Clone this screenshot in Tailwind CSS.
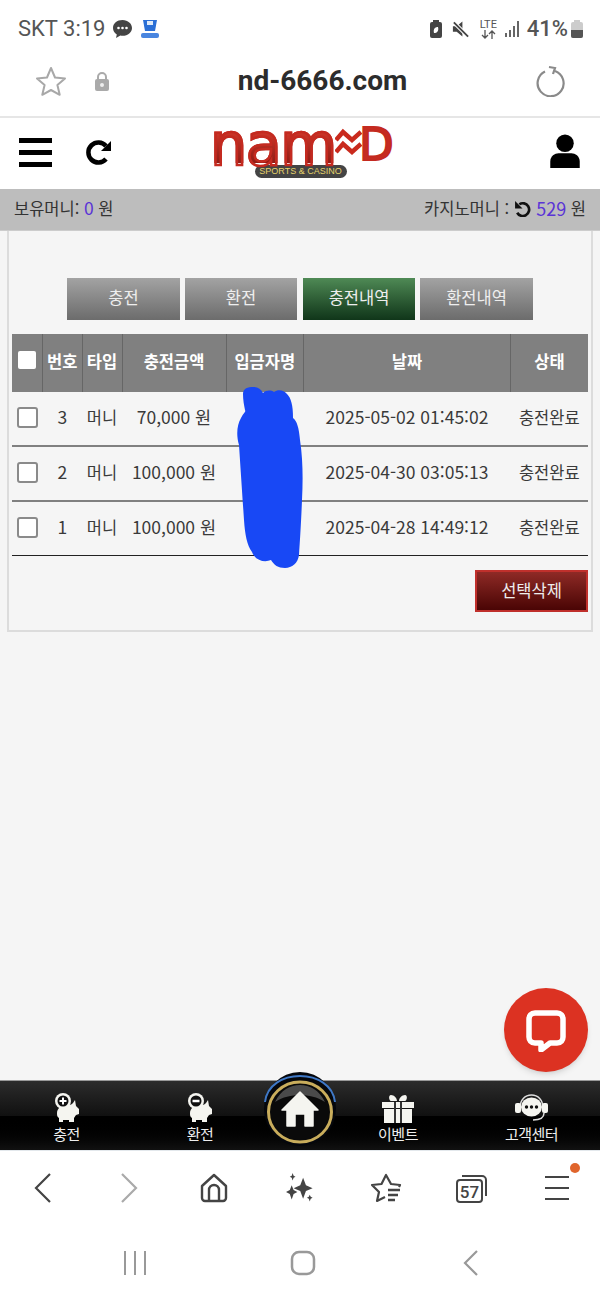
<!DOCTYPE html>
<html lang="ko">
<head>
  <meta charset="UTF-8" />
  <title>충전내역</title>
  <script src="https://cdn.jsdelivr.net/npm/@tailwindcss/browser@4"></script>
</head>
<body class="bg-white font-['Noto_Sans_CJK_KR','Noto_Sans',sans-serif]">
  <div class="relative w-[600px] h-[1300px] overflow-hidden flex flex-col">

    <!-- Status bar -->
    <div class="h-[56px] shrink-0 flex items-center justify-between pl-[18px] pr-[17px] pt-[1px] font-['Roboto',sans-serif] text-[#555]">
      <div class="flex items-center">
        <span class="text-[22px] leading-none">SKT 3:19</span>
        <svg class="ml-[7px]" width="21" height="20" viewBox="0 0 21 20"><path d="M10.5 1C5 1 1 4.5 1 9c0 2.700 1.500 5 3.800 6.400L4 19l4.400-2.400c.7.100 1.400.2 2.100.2 5.500 0 9.500-3.500 9.500-7.800S16 1 10.500 1z" fill="#444"/><circle cx="6.500" cy="9" r="1.300" fill="#fff"/><circle cx="10.500" cy="9" r="1.300" fill="#fff"/><circle cx="14.500" cy="9" r="1.300" fill="#fff"/></svg>
        <svg class="ml-[7px]" width="20" height="20" viewBox="0 0 20 20"><path d="M3 1h14l-2 11H5z" fill="#2b6fd6"/><path d="M7 2h6v4H7z" fill="#dfeaf8"/><rect x="1" y="14" width="18" height="5" rx="2" fill="#4a86e0"/></svg>
      </div>
      <div class="flex items-center">
        <svg width="12" height="20" viewBox="0 0 12 20"><rect x="0" y="3" width="12" height="16" rx="2" fill="#444"/><rect x="3" y="1" width="6" height="3" fill="#444"/><path d="M8 8c-3 0-5 2-4 6 3 0 5-2 4-6z" fill="#fff"/></svg>
        <svg class="ml-[9px]" width="19" height="20" viewBox="0 0 20 20"><path d="M2 7h4l6-5v16l-6-5H2z" fill="#444"/><path d="M3 3l15 15" stroke="#fff" stroke-width="4"/><path d="M3 3l15 15" stroke="#444" stroke-width="2"/></svg>
        <div class="ml-[9px] w-[19px] flex flex-col items-center text-[#555]">
          <span class="text-[11px] leading-[11px]">LTE</span>
          <svg width="15" height="9" viewBox="0 0 15 9" fill="none" stroke="#555" stroke-width="1.300"><path d="M4 0v8M1 5l3 3 3-3M11 9V1M8 4l3-3 3 3"/></svg>
        </div>
        <svg class="ml-[6px]" width="16" height="18" viewBox="0 0 16 18"><rect x="1" y="13" width="2" height="4" fill="#666"/><rect x="5" y="10" width="2" height="7" fill="#666"/><rect x="9" y="6" width="2" height="11" fill="#666"/><rect x="13" y="1" width="2" height="16" fill="#666"/></svg>
        <span class="ml-[7px] text-[22px] leading-none font-medium">41%</span>
        <svg class="ml-[3px]" width="12" height="20" viewBox="0 0 12 20"><rect x="0" y="3" width="12" height="16" rx="2" fill="#ccc"/><rect x="3" y="1" width="6" height="3" fill="#ccc"/><path d="M0 11h12v6a2 2 0 0 1-2 2H2a2 2 0 0 1-2-2z" fill="#555"/></svg>
      </div>
    </div>

    <!-- URL bar -->
    <div class="h-[62px] shrink-0 flex items-center border-b-2 border-[#e6e6e6] pl-[35px] pr-[35px] pb-[10px]">
      <svg width="32" height="32" viewBox="0 0 32 32" fill="none" stroke="#a8a8a8" stroke-width="2" stroke-linejoin="round"><path d="M16 3l4 9.500 10 .9-7.600 6.600 2.300 9.800L16 25l-8.700 4.800 2.300-9.800L2 13.400l10-.9z"/></svg>
      <svg class="ml-[27px]" width="16" height="22" viewBox="0 0 16 22"><path d="M4 10V7a4 4 0 0 1 8 0v3" fill="none" stroke="#aaa" stroke-width="2"/><rect x="1" y="9" width="14" height="12" rx="2" fill="#aaa"/><circle cx="8" cy="15" r="2" fill="#eee"/></svg>
      <span class="flex-1 text-center font-['Roboto',sans-serif] font-bold text-[28px] leading-none text-[#2c2c2c]">nd-6666.com</span>
      <svg width="30" height="32" viewBox="0 0 30 32" fill="none" stroke="#8a8a8a" stroke-width="2.200"><path d="M10 6.500A13 13 0 1 0 20 6"/><path d="M15 3l6 1-2 6" transform="translate(-1 -1)"/></svg>
    </div>

    <!-- Site header -->
    <div class="h-[71px] shrink-0 flex items-center pl-[19px] pr-[19px]">
      <div class="w-[33px] flex flex-col gap-[7px] mt-[-2px]">
        <div class="h-[5px] bg-black"></div>
        <div class="h-[5px] bg-black"></div>
        <div class="h-[5px] bg-black"></div>
      </div>
      <svg class="ml-[32px] mt-[-2px]" width="30" height="30" viewBox="0 0 30 30" fill="none"><path d="M22 21a10 10 0 1 1 0-13" stroke="#000" stroke-width="4.500"/><path d="M27 3v10H17z" fill="#000"/></svg>
      <div class="flex-1 flex flex-col items-center mt-[-2px] mr-[62px]">
        <div class="relative top-[-1px] flex items-center h-[36px] font-['DejaVu_Sans',sans-serif]">
          <span class="text-[58px] leading-[36px] tracking-[-1px] bg-gradient-to-b from-[#d83a2c] to-[#8f1d16] bg-clip-text text-transparent [-webkit-text-stroke:2.500px_#c42a20]">nam</span>
          <svg class="ml-[-1px]" width="27" height="34" viewBox="0 0 27 34" fill="none" stroke="#c92a1d" stroke-width="4.500"><path d="M1 12l7-8 9 8 9-8"/><path d="M1 24l7-8 9 8 9-8"/></svg>
          <span class="ml-[-3px] mr-[-3px] text-[45px] leading-[36px] text-[#c62c20] [-webkit-text-stroke:2px_#c42a20]">D</span>
        </div>
        <div class="mt-[1px] w-[92px] h-[13px] rounded-full bg-[#444] text-center font-['Liberation_Sans',sans-serif] text-[9px] leading-[13px] text-[#e6d36a]">SPORTS &amp; CASINO</div>
      </div>
      <svg width="32" height="35" viewBox="0 0 34 38" class="mt-[-5px]"><circle cx="17" cy="10" r="9.500" fill="#000"/><path d="M1 37v-7c0-6 5-9 9-9h14c4 0 9 3 9 9v7z" fill="#000"/></svg>
    </div>

    <!-- Money bar -->
    <div class="h-[42px] shrink-0 bg-[#bdbdbd] border-b border-[#ccc] flex items-center justify-between px-[14px] pb-[2px] text-[16.500px] text-[#333]">
      <div>보유머니: <span class="text-[17.500px] text-[#5a34d6]">0</span> 원</div>
      <div class="flex items-center">카지노머니 :
        <svg class="mx-[5px]" width="17" height="17" viewBox="0 0 16 16" fill="none"><path d="M5 4a6 6 0 1 1-2 8" stroke="#111" stroke-width="2.500"/><path d="M1 1v7h7z" fill="#111"/></svg>
        <span class="text-[18px] text-[#5a34d6]">529</span>&nbsp;원
      </div>
    </div>

    <!-- Page body -->
    <div class="flex-1 bg-[#f5f5f5] px-[7px]">
      <div class="h-[401px] border-2 border-t-0 border-[#dcdcdc] px-[3px] pt-[47px]">
        <div class="flex justify-center gap-[5px] text-[16.500px] leading-[39px] text-center text-[#eee]">
          <div class="w-[113px] h-[42px] bg-gradient-to-b from-[#a3a3a3] to-[#6c6c6c]">충전</div>
          <div class="w-[112px] h-[42px] bg-gradient-to-b from-[#a3a3a3] to-[#6c6c6c]">환전</div>
          <div class="w-[112px] h-[42px] bg-gradient-to-b from-[#4f8a55] to-[#10361a] ml-[1px]">충전내역</div>
          <div class="w-[113px] h-[42px] bg-gradient-to-b from-[#a3a3a3] to-[#6c6c6c]">환전내역</div>
        </div>

        <table class="mt-[14px] w-[576px] table-fixed border-collapse text-center text-[16.500px] text-[#3a3a3a]">
          <thead>
            <tr class="h-[58px] bg-[#808080] text-white font-bold">
              <th class="w-[30.500px] border-r border-[#666]"><div class="w-[18px] h-[18px] mx-auto rounded-[2px] bg-white mt-[-6px]"></div></th>
              <th class="w-[39.500px] border-r border-[#666] pb-[3px]">번호</th>
              <th class="w-[40px] border-r border-[#666] pb-[3px]">타입</th>
              <th class="w-[104px] border-r border-[#666] pb-[3px]">충전금액</th>
              <th class="w-[77.500px] border-r border-[#666] pb-[3px]">입금자명</th>
              <th class="w-[207px] border-r border-[#666] pb-[3px]">날짜</th>
              <th class="pb-[3px]">상태</th>
            </tr>
          </thead>
          <tbody class="[&_td]:pb-[2px]">
            <tr class="h-[54px] border-b-2 border-[#808080]">
              <td><div class="w-[21px] h-[21px] mx-auto rounded-[3px] border-2 border-[#8a8a8a] bg-white"></div></td>
              <td class="text-[17.500px]">3</td><td>머니</td><td class="text-[17.500px] whitespace-nowrap">70,000 원</td><td></td><td class="text-[17.500px] whitespace-nowrap">2025-05-02 01:45:02</td><td>충전완료</td>
            </tr>
            <tr class="h-[55px] border-b-2 border-[#808080]">
              <td><div class="w-[21px] h-[21px] mx-auto rounded-[3px] border-2 border-[#8a8a8a] bg-white"></div></td>
              <td class="text-[17.500px]">2</td><td>머니</td><td class="text-[17.500px] whitespace-nowrap">100,000 원</td><td></td><td class="text-[17.500px] whitespace-nowrap">2025-04-30 03:05:13</td><td>충전완료</td>
            </tr>
            <tr class="h-[54px] border-b border-[#222]">
              <td><div class="w-[21px] h-[21px] mx-auto rounded-[3px] border-2 border-[#8a8a8a] bg-white"></div></td>
              <td class="text-[17.500px]">1</td><td>머니</td><td class="text-[17.500px] whitespace-nowrap">100,000 원</td><td></td><td class="text-[17.500px] whitespace-nowrap">2025-04-28 14:49:12</td><td>충전완료</td>
            </tr>
          </tbody>
        </table>

        <div class="flex justify-end mt-[14px]">
          <div class="w-[113px] h-[42px] border-2 border-[#c0302c] bg-gradient-to-b from-[#8f2a26] to-[#4a0505] text-center text-[16.500px] leading-[36px] text-[#eee]">선택삭제</div>
        </div>
      </div>
    </div>

    <!-- Bottom site nav -->
    <div class="relative h-[70px] shrink-0 border-t border-[#999] bg-gradient-to-b from-[#2c2c2c] via-[#111] to-[#000] grid grid-cols-[133px_134px_66px_130px_137px] text-[15px] tracking-[-.5px] text-[#eee] text-center">
      <div class="absolute inset-x-0 top-[35px] bottom-0 bg-gradient-to-b from-black to-[#111]"></div>
      <div class="relative flex flex-col items-center pt-[12px]">
        <svg width="26" height="30" viewBox="0 0 26 30"><path d="M3 20c0-5 5-8 10-8 3 0 4 0 6-2l2-3 1 6 3 3v5l-3 1-2 3v4h-5v-2H9v2H5v-4c-2-1-2-3-2-5z" fill="#f5f5f0"/><circle cx="9" cy="8" r="8" fill="#f5f5f0"/><circle cx="9" cy="8" r="5.500" fill="#111"/><path d="M5.500 8h7M9 4.500v7" stroke="#fff" stroke-width="2"/></svg>
        <span class="leading-[18px] mt-[2px]">충전</span>
      </div>
      <div class="relative flex flex-col items-center pt-[12px]">
        <svg width="26" height="30" viewBox="0 0 26 30"><path d="M3 20c0-5 5-8 10-8 3 0 4 0 6-2l2-3 1 6 3 3v5l-3 1-2 3v4h-5v-2H9v2H5v-4c-2-1-2-3-2-5z" fill="#f5f5f0"/><circle cx="9" cy="8" r="8" fill="#f5f5f0"/><circle cx="9" cy="8" r="5.500" fill="#111"/><path d="M5.500 8h7" stroke="#fff" stroke-width="2.500"/></svg>
        <span class="leading-[18px] mt-[2px]">환전</span>
      </div>
      <div class="relative">
        <svg class="absolute left-[-4px] top-[-9px] overflow-visible" width="74" height="76" viewBox="0 0 74 76">
          <ellipse cx="37" cy="37" rx="36" ry="37" fill="#05070c"/>
          <path d="M2 30C4 13 20 4 37 4s33 9 35 26" fill="none" stroke="#3f78c6" stroke-width="2"/>
          <ellipse cx="37" cy="40" rx="31.500" ry="30" fill="#0a0a0a" stroke="#c9ad5c" stroke-width="3"/>
          <path d="M12 30c6-12 15-17 25-17s19 5 25 17c-8-5-16-7-25-7s-17 2-25 7z" fill="#4a4a4a"/>
          <path d="M37 20L19 38h5v16h8V42h10v12h8V38h5z" fill="#f5f5f0" stroke="#f5f5f0" stroke-width="1.500" stroke-linejoin="round"/>
        </svg>
      </div>
      <div class="relative flex flex-col items-center pt-[12px]">
        <svg width="32" height="30" viewBox="0 0 32 30"><path d="M9 2c3 0 6 3 6 6H9c-2 0-3-6 0-6zM23 2c-3 0-6 3-6 6h6c2 0 3-6 0-6z" fill="#f5f5f0"/><rect x="0" y="9" width="32" height="6" fill="#f5f5f0"/><rect x="2" y="16" width="28" height="14" fill="#f5f5f0"/><rect x="12" y="9" width="2" height="21" fill="#333"/><rect x="18" y="9" width="2" height="21" fill="#333"/></svg>
        <span class="leading-[18px] mt-[2px]">이벤트</span>
      </div>
      <div class="relative flex flex-col items-center pt-[12px]">
        <svg width="35" height="30" viewBox="0 0 35 30" fill="none"><path d="M6 15C6 7 11 2 17.500 2S29 7 29 15" stroke="#ddd" stroke-width="1.500"/><ellipse cx="17.500" cy="14" rx="10.500" ry="9.500" fill="#f5f5f0"/><rect x="1" y="10" width="6" height="10" rx="2" fill="#f5f5f0"/><rect x="28" y="10" width="6" height="10" rx="2" fill="#f5f5f0"/><circle cx="12.500" cy="14" r="1.700" fill="#111"/><circle cx="17.500" cy="14" r="1.700" fill="#111"/><circle cx="22.500" cy="14" r="1.700" fill="#111"/><path d="M30 20c0 5-4 7-11 7" stroke="#ddd" stroke-width="1.500"/></svg>
        <span class="leading-[18px] mt-[2px]">고객센터</span>
      </div>
    </div>

    <!-- Browser toolbar -->
    <div class="h-[75px] shrink-0 border-t border-[#e3e8ec] grid grid-cols-7 place-items-center">
      <svg width="20" height="32" viewBox="0 0 20 32" fill="none" stroke="#444" stroke-width="2.200"><path d="M17 2L3 16l14 14"/></svg>
      <svg width="20" height="32" viewBox="0 0 20 32" fill="none" stroke="#aaa" stroke-width="2.200"><path d="M3 2l14 14L3 30"/></svg>
      <svg width="30" height="30" viewBox="0 0 30 30" fill="none" stroke="#444" stroke-width="2.400" stroke-linejoin="round"><path d="M3 13L15 2l12 11v12a3 3 0 0 1-3 3H6a3 3 0 0 1-3-3z"/><path d="M10 28V17a5 5 0 0 1 10 0v11"/></svg>
      <svg width="30" height="30" viewBox="0 0 30 30" fill="#444"><path d="M18 5l3 8 7 3-7 3-3 8-3-8-7-3 7-3zM7 0l1 3 2 1-2 1-1 3-1-3-2-1 2-1zM6 13l2 5 4 2-4 2-2 6-2-6-4-2 4-2zM25 23l1 2 2 1-2 1-1 3-1-3-2-1 2-1z" transform="translate(1 0) scale(.95)"/></svg>
      <svg width="32" height="30" viewBox="0 0 32 30" fill="none" stroke="#444" stroke-width="2.200" stroke-linejoin="round"><path d="M29 14l1-2-9-1-5-9-4.500 9L2 12l7 7-2 9 8-4"/><path d="M18 17h12M18 22h10M18 27h7" stroke-width="2.400"/></svg>
      <svg width="32" height="30" viewBox="0 0 32 30" fill="none" stroke="#444" stroke-width="2"><rect x="2" y="7" width="25" height="22" rx="3"/><path d="M7 3h20a4 4 0 0 1 4 4v16"/><text x="14.500" y="25" text-anchor="middle" fill="#444" stroke="none" font-family="Roboto" font-weight="500" font-size="17">57</text></svg>
      <div class="relative">
        <div class="w-[24px] flex flex-col gap-[8.500px]">
          <div class="h-[2.500px] bg-[#444]"></div>
          <div class="h-[2.500px] bg-[#444]"></div>
          <div class="h-[2.500px] bg-[#444]"></div>
        </div>
        <div class="absolute right-[-11px] top-[-13px] w-[10px] h-[10px] rounded-full bg-[#e0652c]"></div>
      </div>
    </div>

    <!-- System nav -->
    <div class="flex-none h-[75px] pl-[51px] grid grid-cols-[168px_168px_168px] justify-start place-items-center">
      <svg width="24" height="24" viewBox="0 0 24 24" stroke="#999" stroke-width="2"><path d="M2 0v24M12 0v24M22 0v24"/></svg>
      <svg width="26" height="26" viewBox="0 0 26 26" fill="none" stroke="#999" stroke-width="2.500"><rect x="2" y="2" width="22" height="22" rx="7"/></svg>
      <svg width="16" height="26" viewBox="0 0 16 26" fill="none" stroke="#999" stroke-width="2.200"><path d="M14 1L2 13l12 12"/></svg>
    </div>

    <!-- Blue scribble over the table -->
    <svg class="absolute left-[230px] top-[380px]" width="80" height="195" viewBox="230 380 80 195">
      <path d="M243 394C243 388 248 387 253 387C258 387 261 389 263 393C266 390 271 390 274 392C278 389 284 390 287 394C291 398 293 405 293 418C297 421 299 428 300 440C303 460 303 480 302 500C301 525 300 540 299 555C298 563 292 568 285 568C278 568 274 565 271 560C264 563 255 560 252 552C247 545 245 535 244 520C242 490 240 460 239 445C236 435 237 425 241 418C244 412 246 412 245 410C244 405 243 400 243 394Z" fill="#1848f5"/>
    </svg>

    <!-- Floating chat button -->
    <div class="absolute left-[504px] top-[988px] w-[84px] h-[84px] rounded-full bg-[#dc3222] shadow-md flex items-center justify-center">
      <svg width="44" height="44" viewBox="0 0 44 44" fill="none"><path d="M11 5h22c4 0 6 3 6 6v18c0 3-2 6-6 6h-7l-9 7v-7h-6c-4 0-6-3-6-6V11c0-3 2-6 6-6z" stroke="#fff" stroke-width="5.500" stroke-linejoin="round"/></svg>
    </div>
  </div>
</body>
</html>
